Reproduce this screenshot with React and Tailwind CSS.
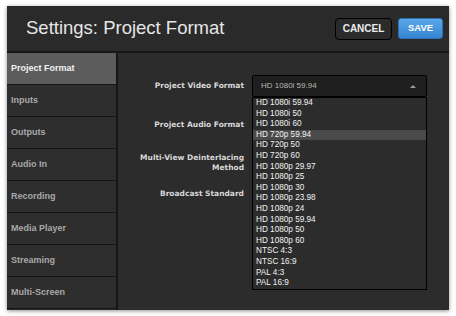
import React from 'react';

const navItems = [
  'Project Format',
  'Inputs',
  'Outputs',
  'Audio In',
  'Recording',
  'Media Player',
  'Streaming',
  'Multi-Screen',
];

const formats = [
  'HD 1080i 59.94',
  'HD 1080i 50',
  'HD 1080i 60',
  'HD 720p 59.94',
  'HD 720p 50',
  'HD 720p 60',
  'HD 1080p 29.97',
  'HD 1080p 25',
  'HD 1080p 30',
  'HD 1080p 23.98',
  'HD 1080p 24',
  'HD 1080p 59.94',
  'HD 1080p 50',
  'HD 1080p 60',
  'NTSC 4:3',
  'NTSC 16:9',
  'PAL 4:3',
  'PAL 16:9',
];

const Label = ({ children }) => (
  <div className="w-[134px] pr-[8px] text-right font-['DejaVu_Sans',sans-serif] font-bold text-[7.5px] leading-[10px] text-[#d8d8d8]">
    {children}
  </div>
);

export default function App() {
  return (
    <div className="w-[456px] h-[316px] bg-white pt-[6px] pl-[7px] font-['Liberation_Sans',Arial,sans-serif]">
      <div className="w-[442px] h-[304px] bg-[#2c2c2c] shadow-[0_1px_4px_rgba(0,0,0,0.45)] flex flex-col">
        {/* Header */}
        <div className="h-[47px] flex items-center justify-between pl-[19px] pr-[6px] border-b-2 border-[#161616] bg-[#2a2a2a]">
          <h1 className="text-[18.5px] text-[#e6e6e6] leading-none">Settings: Project Format</h1>
          <div className="flex items-center gap-[6px]">
            <button className="w-[57px] h-[22px] rounded-[4px] border border-black bg-[#2b2b2b] text-[10px] font-bold text-[#ececec]">
              CANCEL
            </button>
            <button className="w-[45px] h-[21px] rounded-[3px] border border-[#2c72b4] bg-gradient-to-b from-[#5aa8ea] to-[#3584cf] text-[9.5px] font-bold text-white">
              SAVE
            </button>
          </div>
        </div>

        {/* Body */}
        <div className="flex flex-1">
          <nav className="w-[111px] border-r-2 border-[#161616] flex flex-col">
            {navItems.map((item, i) => (
              <div
                key={item}
                className={`h-[32px] border-b border-[#161616] flex items-center pl-[4px] text-[9px] font-bold ${
                  i === 0 ? 'bg-[#5c5c5c] text-[#f2f2f2]' : 'bg-[#2e2e2e] text-[#a9a9a9]'
                }`}
              >
                {item}
              </div>
            ))}
          </nav>

          <div className="flex-1 pt-[22px]">
            <div className="flex items-center h-[22px]">
              <Label>Project Video Format</Label>
              <div className="relative w-[175px] h-[22px]">
                <div className="h-full rounded-[2px] border border-black bg-[#1f1f1f] flex items-center justify-between pl-[8px] pr-[10px]">
                  <span className="text-[8px] text-[#b8b8b8]">HD 1080i 59.94</span>
                  <span className="w-0 h-0 border-l-[3px] border-r-[3px] border-b-[3px] border-l-transparent border-r-transparent border-b-[#9a9a9a]" />
                </div>
                {/* open dropdown list */}
                <ul className="absolute left-0 top-[22px] w-[175px] border border-black bg-[#2c2c2c] z-10">
                  {formats.map((f, i) => (
                    <li
                      key={f}
                      className={`h-[10.6px] leading-[10.6px] pl-[3px] text-[8.2px] text-[#f2f2f2] ${
                        i === 3 ? 'bg-[#4a4a4a]' : ''
                      }`}
                    >
                      {f}
                    </li>
                  ))}
                </ul>
              </div>
            </div>

            <div className="flex items-center h-[22px] mt-[17px]">
              <Label>Project Audio Format</Label>
            </div>

            <div className="flex items-center h-[22px] mt-[16px]">
              <Label>
                Multi-View Deinterlacing
                <br />
                Method
              </Label>
            </div>

            <div className="flex items-center h-[22px] mt-[9px]">
              <Label>Broadcast Standard</Label>
            </div>
          </div>
        </div>
      </div>
    </div>
  );
}
